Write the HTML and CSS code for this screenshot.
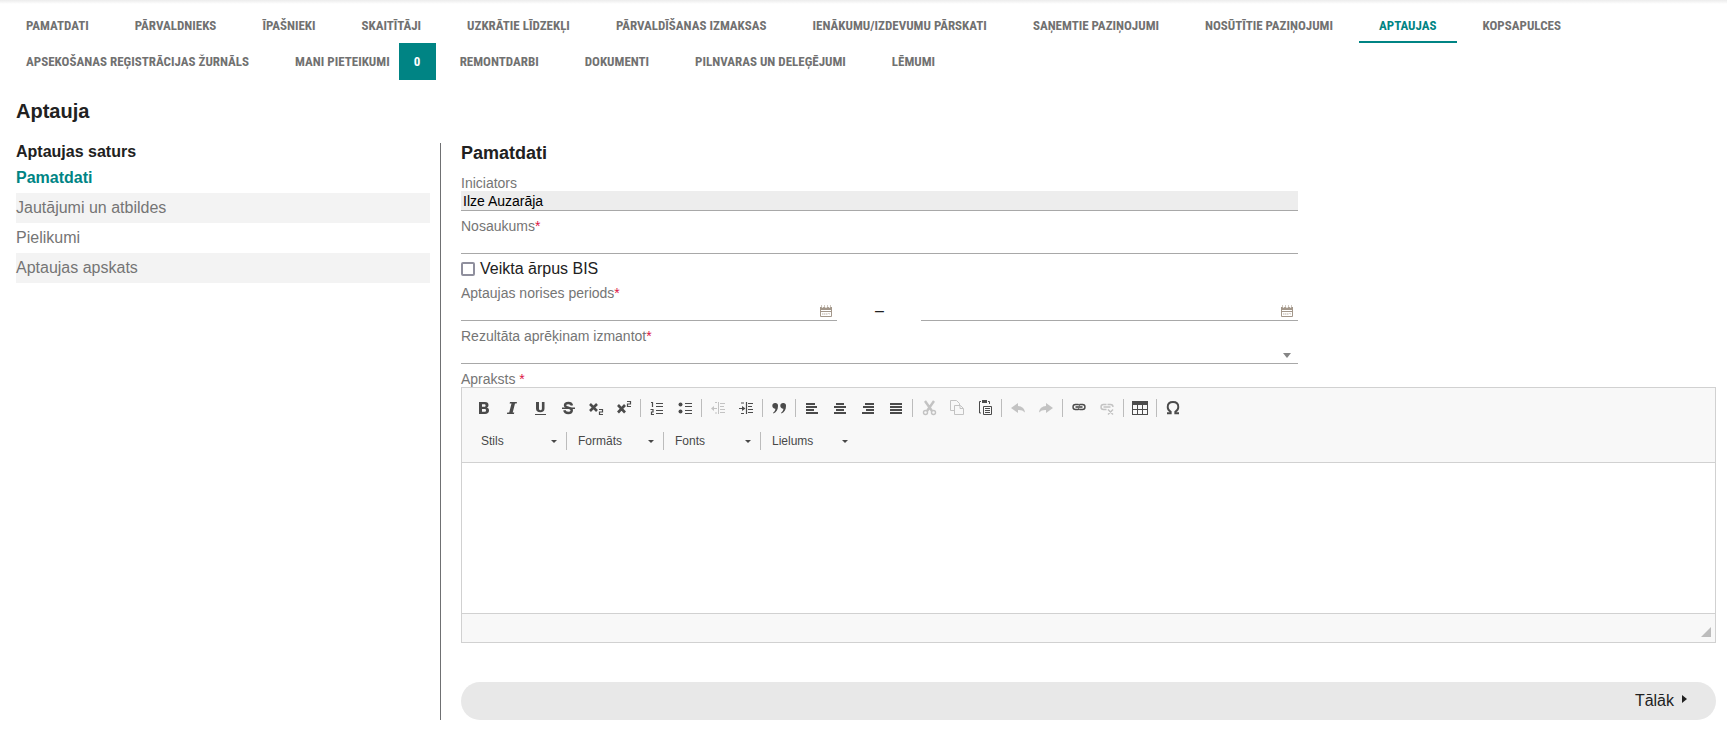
FILE: index.html
```html
<!DOCTYPE html>
<html lang="lv">
<head>
<meta charset="utf-8">
<meta name="viewport" content="width=device-width, initial-scale=1">
<title>Aptauja</title>
<link rel="stylesheet" href="styles.css">
</head>
<body>
<nav class="tabs">
  <a class="tab" href="#">PAMATDATI</a>
  <a class="tab" href="#">PĀRVALDNIEKS</a>
  <a class="tab" href="#">ĪPAŠNIEKI</a>
  <a class="tab" href="#">SKAITĪTĀJI</a>
  <a class="tab" href="#">UZKRĀTIE LĪDZEKĻI</a>
  <a class="tab" href="#">PĀRVALDĪŠANAS IZMAKSAS</a>
  <a class="tab" href="#">IENĀKUMU/IZDEVUMU PĀRSKATI</a>
  <a class="tab" href="#">SAŅEMTIE PAZIŅOJUMI</a>
  <a class="tab" href="#">NOSŪTĪTIE PAZIŅOJUMI</a>
  <a class="tab tab-active" href="#" aria-current="page">APTAUJAS</a>
  <a class="tab" href="#">KOPSAPULCES</a>
  <a class="tab" href="#">APSEKOŠANAS REĢISTRĀCIJAS ŽURNĀLS</a>
  <a class="tab tab-counted" href="#">MANI PIETEIKUMI <span class="count">0</span></a>
  <a class="tab" href="#">REMONTDARBI</a>
  <a class="tab" href="#">DOKUMENTI</a>
  <a class="tab" href="#">PILNVARAS UN DELEĢĒJUMI</a>
  <a class="tab" href="#">LĒMUMI</a>
</nav>

<h1 class="page-title">Aptauja</h1>

<div class="columns">
  <aside class="contents">
    <h2 class="contents-title">Aptaujas saturs</h2>
    <ul class="contents-list">
      <li><a class="current" href="#">Pamatdati</a></li>
      <li><a href="#">Jautājumi un atbildes</a></li>
      <li><a href="#">Pielikumi</a></li>
      <li><a href="#">Aptaujas apskats</a></li>
    </ul>
  </aside>

  <main class="main">
    <h2 class="section-title">Pamatdati</h2>
    <form>
      <div class="fields">
        <div class="field">
          <label for="initiator">Iniciators</label>
          <input class="control" id="initiator" type="text" value="Ilze Auzarāja" readonly>
        </div>
        <div class="field">
          <label for="name">Nosaukums<span class="req">*</span></label>
          <input class="control" id="name" type="text">
        </div>
        <label class="check"><input type="checkbox">Veikta ārpus BIS</label>
        <div class="field">
          <label for="date-from">Aptaujas norises periods<span class="req">*</span></label>
          <div class="period">
            <div class="date">
              <input class="control" id="date-from" type="text">
              <button class="cal" type="button" aria-label="Izvēlēties datumu no"><svg width="12" height="12" viewBox="0 0 12 12"><path d="M0 2h1.500l1 1 1-1h1L6 3l1.500-1h1l1 1 1-1H12v3H0z" fill="#a3978a"/><path d="M1.500 0v2M4.500 0v2M7.500 0v2M10.500 0v2" stroke="#cfc7be"/><path d="M.5 4.500h11v7H.5zM0 6.500h12" fill="none" stroke="#a3978a"/><path d="M2 8.500h8M2 9.500h6M9.500 8v2" stroke="#ddd7d0" stroke-dasharray="1.500 .5"/></svg></button>
            </div>
            <span class="dash">–</span>
            <div class="date">
              <input class="control" type="text" aria-label="Datums līdz">
              <button class="cal" type="button" aria-label="Izvēlēties datumu līdz"><svg width="12" height="12" viewBox="0 0 12 12"><path d="M0 2h1.500l1 1 1-1h1L6 3l1.500-1h1l1 1 1-1H12v3H0z" fill="#a3978a"/><path d="M1.500 0v2M4.500 0v2M7.500 0v2M10.500 0v2" stroke="#cfc7be"/><path d="M.5 4.500h11v7H.5zM0 6.500h12" fill="none" stroke="#a3978a"/><path d="M2 8.500h8M2 9.500h6M9.500 8v2" stroke="#ddd7d0" stroke-dasharray="1.500 .5"/></svg></button>
            </div>
          </div>
        </div>
        <div class="field">
          <label for="calc">Rezultāta aprēķinam izmantot<span class="req">*</span></label>
          <div class="picker"><select class="control" id="calc"><option></option></select></div>
        </div>
      </div>

      <div class="field description">
        <label for="description">Apraksts <span class="req">*</span></label>
        <div class="editor">
          <div class="toolbar">
            <div class="tools">
              <button type="button" aria-label="Treknraksts"><svg class="ico" viewBox="0 0 16 16"><path fill-rule="evenodd" d="M3 2h6c2.500 0 3.500 1.200 3.500 3 0 1.300-.6 2.200-1.700 2.600 1.500.4 2.200 1.400 2.200 2.900 0 2.200-1.500 3.500-4 3.500H3zM6 4.200v2.600h2.200c1 0 1.400-.5 1.400-1.300S9.200 4.200 8.200 4.200zM6 9v2.800h2.500c1 0 1.500-.5 1.500-1.400S9.500 9 8.500 9z"/></svg></button>
              <button type="button" aria-label="Slīpraksts"><svg class="ico" viewBox="0 0 16 16"><path d="M6 2h7l-.4 1.600h-1.600L8.700 12.400h1.600L9.900 14h-7l.4-1.600h1.900l2.300-8.800h-1.900z"/></svg></button>
              <button type="button" aria-label="Pasvītrots"><svg class="ico" viewBox="0 0 16 16"><path d="M4 2h3v6.500c0 1.200.4 1.700 1.400 1.700s1.500-.5 1.500-1.700V2h2.600v6.500c0 2.500-1.500 3.800-4.200 3.800S4 11 4 8.500zM3 14h11v1H3z"/></svg></button>
              <button type="button" aria-label="Pārsvītrots"><svg class="ico" viewBox="0 0 16 16"><path d="M12 5.500C11.500 3.500 10.300 3 8.500 3 6.500 3 5 3.800 5 5.300c0 3.200 6.800 1.600 6.800 5 0 1.700-1.500 2.700-3.600 2.700-2.200 0-3.500-.9-3.900-2.700" fill="none" stroke="#4b4b4b" stroke-width="2.400"/><path d="M2 7.500h13V9H2z"/></svg></button>
              <button type="button" aria-label="Apakšraksts"><svg class="ico" viewBox="0 0 16 16"><path d="M2 4l7 7M9 4l-7 7" stroke="#4b4b4b" stroke-width="2.600"/><path d="M11 9.500h3.500v2.500h-3v2.500H15" fill="none" stroke="#4b4b4b" stroke-width="1.200"/></svg></button>
              <button type="button" aria-label="Augšraksts"><svg class="ico" viewBox="0 0 16 16"><path d="M2 5l7 7.500M9 5l-7 7.500" stroke="#4b4b4b" stroke-width="2.600"/><path d="M11 1.500h3.500V4h-3v2.500H15" fill="none" stroke="#4b4b4b" stroke-width="1.200"/></svg></button>
              <i class="sep"></i>
              <button type="button" aria-label="Numurēts saraksts"><svg class="ico" viewBox="0 0 16 16"><path d="M2 2.500h1.500V7M1.500 9.500h2.500V12H2.500v2.500h2.500M7 3.500h7M7 6.500h7M7 10.500h7M7 13.500h7" fill="none" stroke="#4b4b4b" stroke-width="1.200"/></svg></button>
              <button type="button" aria-label="Aizzīmju saraksts"><svg class="ico" viewBox="0 0 16 16"><circle cx="3.500" cy="4.500" r="2"/><circle cx="3.500" cy="11.500" r="2"/><path d="M8 3.500h7M8 6.500h7M8 10.500h7M8 13.500h7" stroke="#4b4b4b" stroke-width="1.200"/></svg></button>
              <i class="sep"></i>
              <button type="button" disabled aria-label="Samazināt atkāpi"><svg class="ico" viewBox="0 0 16 16"><path d="M8.500 2v12M10 3.500h5M10 6.500h4M10 9.500h5M10 12.500h5M3 8.500h4M5 2.500h2M5 13h2" fill="none" stroke="#4b4b4b"/><path d="M1 8.500L4 6v5z"/></svg></button>
              <button type="button" aria-label="Palielināt atkāpi"><svg class="ico" viewBox="0 0 16 16"><path d="M8.500 2v12M10 3.500h5M10 6.500h4M10 9.500h5M10 12.500h5M1 8.500h4M3 3h3M3 13.500h3" fill="none" stroke="#4b4b4b" stroke-width="1.200"/><path d="M7.500 8.500L4 6v5z"/></svg></button>
              <i class="sep"></i>
              <button type="button" aria-label="Citāts"><svg class="ico" viewBox="0 0 16 16"><path d="M4 3a2.600 2.600 0 0 1 3 3c0 3.500-1.500 6-4.500 7.500L2 12.700c1.500-1 2.300-2.300 2.400-4C2.700 8.800 1.300 7.600 1.300 5.800S2.500 3 4 3zM12 3a2.600 2.600 0 0 1 3 3c0 3.500-1.500 6-4.500 7.500l-.5-.8c1.500-1 2.300-2.300 2.400-4-1.700.1-3.100-1.100-3.100-2.900S10.500 3 12 3z"/></svg></button>
              <i class="sep"></i>
              <button type="button" aria-label="Pa kreisi"><svg class="ico" viewBox="0 0 16 16"><path d="M2 3h9v2H2zM2 6h11v2H2zM2 9h8v2H2zM2 12h12v2H2z"/></svg></button>
              <button type="button" aria-label="Centrēt"><svg class="ico" viewBox="0 0 16 16"><path d="M4 3h8v2H4zM2 6h12v2H2zM4 9h8v2H4zM2 12h12v2H2z"/></svg></button>
              <button type="button" aria-label="Pa labi"><svg class="ico" viewBox="0 0 16 16"><path d="M5 3h9v2H5zM3 6h11v2H3zM6 9h8v2H6zM2 12h12v2H2z"/></svg></button>
              <button type="button" aria-label="Abpusēji"><svg class="ico" viewBox="0 0 16 16"><path d="M2 3h12v2H2zM2 6h12v2H2zM2 9h12v2H2zM2 12h12v2H2z"/></svg></button>
              <i class="sep"></i>
              <button type="button" disabled aria-label="Izgriezt"><svg class="ico" viewBox="0 0 16 16"><path d="M4 1l7 10M13 1L6 11" fill="none" stroke="#4b4b4b" stroke-width="2.400"/><circle cx="4.500" cy="12.500" r="2" fill="none" stroke="#4b4b4b" stroke-width="1.400"/><circle cx="12.500" cy="12.500" r="2" fill="none" stroke="#4b4b4b" stroke-width="1.400"/></svg></button>
              <button type="button" disabled aria-label="Kopēt"><svg class="ico" viewBox="0 0 16 16"><path d="M5.500 10.500h-4v-10h6l3 3V5M5.500 5.500h6l3 3v6h-9zM11 5.500v3h3" fill="none" stroke="#4b4b4b"/></svg></button>
              <button type="button" aria-label="Ielīmēt"><svg class="ico" viewBox="0 0 16 16"><path d="M5 0h5v3H5z"/><path d="M4 1.500H2.500v11.500H4M11 1.500h1.500V4M6.500 6.500h8v8h-8zM8 8.500h5M8 10.500h5M8 12.500h5" fill="none" stroke="#4b4b4b"/></svg></button>
              <i class="sep"></i>
              <button type="button" disabled aria-label="Atcelt"><svg class="ico" viewBox="0 0 16 16"><path d="M1 8l7-5v3c4 .3 6.500 2.500 7 6.500-2-2-4-2.700-7-2.500v3z"/></svg></button>
              <button type="button" disabled aria-label="Atkārtot"><svg class="ico" viewBox="0 0 16 16"><path d="M15 8L8 3v3c-4 .3-6.500 2.500-7 6.500 2-2 4-2.700 7-2.500v3z"/></svg></button>
              <i class="sep"></i>
              <button type="button" aria-label="Saite"><svg class="ico" viewBox="0 0 16 16"><path d="M7.500 4.500h-3a2.500 2.500 0 0 0 0 5h3M8.500 4.500h3a2.500 2.500 0 0 1 0 5h-3M7.500 4.500l1.500 1M8.500 9.500L7 8.500" fill="none" stroke="#4b4b4b" stroke-width="1.400"/><path d="M4.500 7h7" stroke="#4b4b4b" stroke-width="1.600"/></svg></button>
              <button type="button" disabled aria-label="Noņemt saiti"><svg class="ico" viewBox="0 0 16 16"><path d="M7.500 4.500h-3a2.500 2.500 0 0 0 0 5h3M8.500 4.500h3c1.500 0 2.500 1 2.500 2.500M4.500 7h7M9 9.500l5 5M14 9.500l-5 5" fill="none" stroke="#4b4b4b" stroke-width="1.400"/></svg></button>
              <i class="sep"></i>
              <button type="button" aria-label="Tabula"><svg class="ico" viewBox="0 0 16 16"><path fill-rule="evenodd" d="M0 1h16v14H0zM1 5v4h4V5zM6 5v4h4V5zM11 5v4h4V5zM1 10v4h4v-4zM6 10v4h4v-4zM11 10v4h4v-4z"/></svg></button>
              <i class="sep"></i>
              <button type="button" aria-label="Īpašie simboli"><svg class="ico" viewBox="0 0 16 16"><path d="M2 13.200h3.700v-1.400C3.700 10.500 2.700 9 2.700 6.900 2.700 3.800 4.900 2 8 2s5.300 1.800 5.300 4.900c0 2.100-1 3.600-3 4.900v1.400H14" fill="none" stroke="#4b4b4b" stroke-width="1.900"/></svg></button>
            </div>
            <div class="tools combos">
              <div class="combo"><select aria-label="Stils"><option>Stils</option></select></div>
              <i class="sep"></i>
              <div class="combo"><select aria-label="Formāts"><option>Formāts</option></select></div>
              <i class="sep"></i>
              <div class="combo"><select aria-label="Fonts"><option>Fonts</option></select></div>
              <i class="sep"></i>
              <div class="combo"><select aria-label="Lielums"><option>Lielums</option></select></div>
            </div>
          </div>
          <textarea class="editor-text" id="description"></textarea>
          <div class="editor-foot"><span class="grip"></span></div>
        </div>
      </div>

      <div class="actions">
        <button class="next" type="submit">Tālāk<span class="next-arrow"></span></button>
      </div>
    </form>
  </main>
</div>
</body>
</html>
```
FILE: styles.css
```css
* {
  box-sizing: border-box;
}

body {
  margin: 0;
  background: #fff;
  color: #212121;
  font: 16px/20px "Liberation Sans", Arial, sans-serif;
}

a {
  text-decoration: none;
}

button,
input,
select,
textarea {
  margin: 0;
  font-family: inherit;
}

/* Tabs */
.tabs {
  display: flex;
  flex-wrap: wrap;
  column-gap: 6px;
  padding: 7px 6px 0;
  background: linear-gradient(#ececec, #fff 4px);
}

.tab {
  height: 36px;
  padding: 0 20px;
  border-bottom: 2px solid transparent;
  color: #717171;
  font: bold 13px/37px "Liberation Sans Narrow", "Roboto Condensed", sans-serif;
}

.tab-active {
  border-bottom-color: #008484;
  color: #008484;
}

.tab-counted {
  display: flex;
  gap: 9px;
  padding-right: 0;
}

.tab-counted + .tab {
  padding-left: 18px;
}

.count {
  width: 37px;
  height: 37px;
  background: #008484;
  color: #fff;
  text-align: center;
}

.page-title {
  margin: 20px 16px;
  font-size: 20px;
  line-height: 24px;
}

.columns {
  display: grid;
  grid-template-columns: 25% 1fr;
  padding: 0 11px 14px 16px;
}

/* Contents list */
.contents {
  padding-right: 10px;
  border-right: 1px solid #6f7072;
}

.contents-title {
  margin: 0 0 2px;
  font-size: 16px;
  line-height: 18px;
}

.contents-list {
  margin: 0;
  padding: 0;
  list-style: none;
}

.contents-list a {
  display: block;
  color: #757575;
  line-height: 30px;
}

.contents-list li:nth-child(even) {
  background: #f3f3f3;
}

.contents-list .current {
  color: #008484;
  font-weight: bold;
}

/* Form */
.main {
  min-width: 0;
  padding-left: 20px;
}

.section-title {
  margin: 0 0 12px;
  font-size: 18px;
  line-height: 20px;
}

.fields {
  display: flex;
  flex-direction: column;
  gap: 7px;
  width: 66.667%;
}

.field {
  display: flex;
  flex-direction: column;
}

.field > label {
  color: #757575;
  font-size: 14px;
  line-height: 16px;
}

.req {
  color: #dc1445;
}

.control {
  display: block;
  width: 100%;
  height: 20px;
  padding: 0 2px;
  border: 0;
  border-bottom: 1px solid #a8a8a8;
  border-radius: 0;
  background: transparent;
  color: #000;
  font-size: 14px;
}

.control:read-only:not(select) {
  background: #ededed;
}

.check {
  display: flex;
  align-items: center;
  gap: 5px;
  padding-bottom: 2px;
  line-height: 15px;
}

.check input {
  appearance: none;
  width: 14px;
  height: 14px;
  border: 2px solid #8f8f9d;
  border-radius: 2px;
}

.period {
  display: grid;
  grid-template-columns: 45% 1fr 45%;
}

.date,
.picker,
.combo {
  position: relative;
}

.dash {
  text-align: center;
}

.cal {
  position: absolute;
  right: 5px;
  bottom: 4px;
  padding: 0;
  border: 0;
  background: none;
  line-height: 0;
}

.picker select,
.combo select {
  appearance: none;
}

.picker::after {
  content: "";
  position: absolute;
  right: 7px;
  bottom: 6px;
  border: 4px solid transparent;
  border-top: 5px solid #858585;
  border-bottom: 0;
  pointer-events: none;
}

.description {
  margin-top: 7px;
}

/* Text editor */
.editor {
  border: 1px solid #d1d1d1;
}

.toolbar {
  display: flex;
  flex-direction: column;
  gap: 5px;
  padding: 6px 8px 7px;
  border-bottom: 1px solid #d1d1d1;
  background: #f8f8f8;
}

.tools {
  display: flex;
  flex-wrap: wrap;
  align-items: center;
}

.tools button {
  width: 28px;
  height: 28px;
  padding: 6px;
  border: 0;
  background: none;
  line-height: 0;
}

.tools button:disabled {
  opacity: .3;
}

.ico {
  width: 16px;
  height: 16px;
  fill: #4b4b4b;
}

.sep {
  width: 1px;
  height: 18px;
  margin: 0 2px;
  background: #bcbcbc;
}

.combos {
  padding-left: 2px;
}

.combo {
  width: 92px;
}

.combo select {
  display: block;
  width: 100%;
  height: 28px;
  padding: 0 9px;
  border: 0;
  background: none;
  color: #484848;
  font-size: 12px;
}

.combo::after {
  content: "";
  position: absolute;
  top: 13px;
  right: 7px;
  border: 3px solid transparent;
  border-top-color: #484848;
  border-bottom: 0;
  pointer-events: none;
}

.editor-text {
  display: block;
  width: 100%;
  height: 150px;
  padding: 8px;
  border: 0;
  resize: none;
}

.editor-foot {
  display: flex;
  justify-content: flex-end;
  align-items: flex-end;
  height: 29px;
  padding: 0 4px 5px;
  border-top: 1px solid #d1d1d1;
  background: #f8f8f8;
}

.grip {
  border: 5px solid #bcbcbc;
  border-top-color: transparent;
  border-left-color: transparent;
}

.actions {
  display: flex;
  justify-content: flex-end;
  margin-top: 39px;
  padding: 0 29px;
  border-radius: 19px;
  background: #e8e8e8;
}

.next {
  display: flex;
  align-items: center;
  gap: 8px;
  height: 38px;
  padding: 0;
  border: 0;
  background: none;
  color: #212121;
  font-size: 16px;
}

.next-arrow {
  margin-bottom: 4px;
  border: 4px solid transparent;
  border-right: 0;
  border-left: 5px solid #212121;
}
```
